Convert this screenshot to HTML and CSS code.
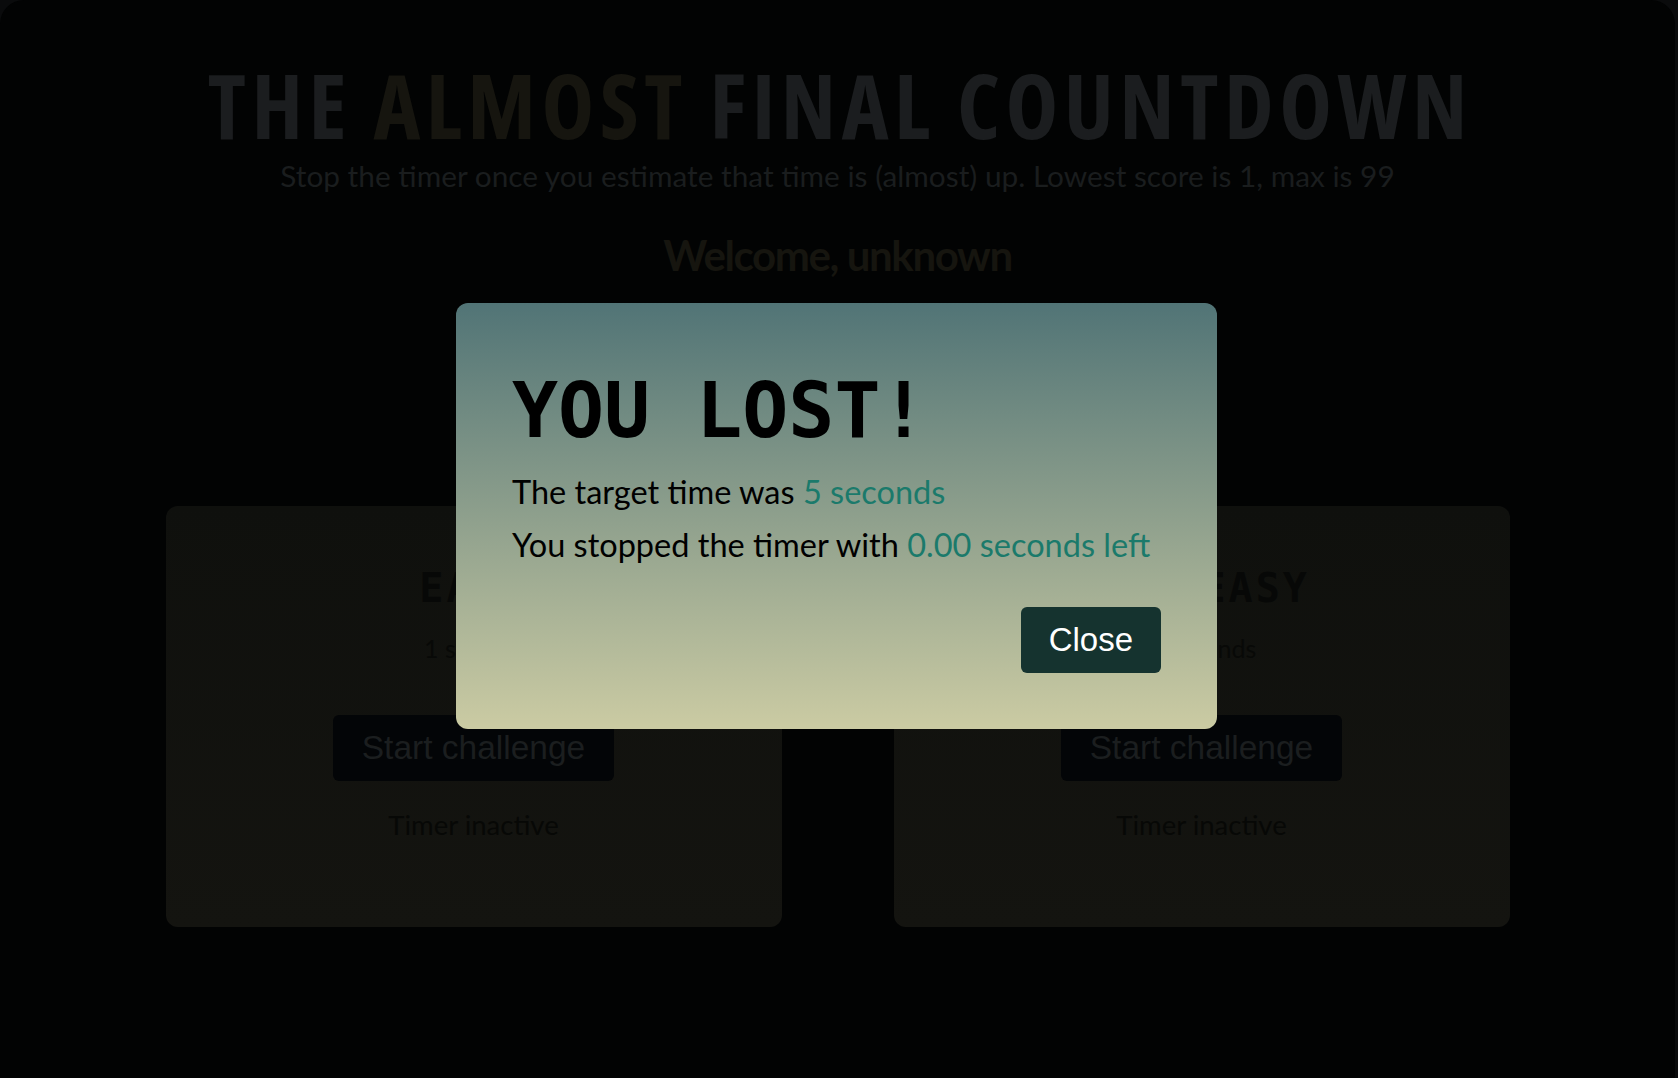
FILE: index.html
```html
<!DOCTYPE html>
<html lang="en">
<head>
<meta charset="utf-8">
<title>The Almost Final Countdown</title>
<link rel="stylesheet" href="styles.css">
</head>
<body>
<div class="content">
  <header class="header">
    <h1 class="title">THE <em class="title-em">ALMOST</em> FINAL COUNTDOWN</h1>
    <p class="subtitle">Stop the timer once you estimate that time is (almost) up. Lowest score is 1, max is 99</p>
  </header>
  <section class="player">
    <h2 class="welcome">Welcome, unknown</h2>
  </section>
  <div class="challenges">
    <section class="challenge">
      <h2 class="challenge-title">EASY</h2>
      <p class="challenge-time">1 second</p>
      <button class="start-btn">Start challenge</button>
      <p class="timer-status">Timer inactive</p>
    </section>
    <section class="challenge">
      <h2 class="challenge-title">NOT EASY</h2>
      <p class="challenge-time">5 seconds</p>
      <button class="start-btn">Start challenge</button>
      <p class="timer-status">Timer inactive</p>
    </section>
  </div>
</div>
<div class="modal">
  <h2 class="modal-title">YOU LOST!</h2>
  <p class="modal-line">The target time was <strong class="accent">5 seconds</strong></p>
  <p class="modal-line">You stopped the timer with <strong class="accent">0.00 seconds left</strong></p>
  <div class="modal-actions">
    <button class="close-btn">Close</button>
  </div>
</div>
</body>
</html>
```
FILE: styles.css
```css
* {
  box-sizing: border-box;
}

html {
  background: #0a0b0c;
  font-family: "Lato", "Noto Sans", sans-serif;
}

body {
  margin: 0;
  padding: 0 3px 0 0;
}

.content {
  background: #020303;
  border-radius: 24px;
  min-height: 1120px;
  padding-top: 58px;
}

.header {
  text-align: center;
}

.title {
  margin: 0;
  padding-left: 5.5px;
  font-family: "Open Sans", "Lato", sans-serif;
  font-stretch: 75%;
  font-weight: 700;
  font-size: 89px;
  letter-spacing: 5.5px;
  line-height: 1.05;
  color: #1b1d1f;
}

.title-em {
  font-style: normal;
  color: #16150f;
}

.subtitle {
  margin: 7px 0 0;
  font-size: 29.8px;
  line-height: 1.2;
  color: #1a1d1e;
}

.player {
  text-align: center;
  margin-top: 30px;
}

.welcome {
  margin: 0;
  font-size: 42px;
  font-weight: 700;
  letter-spacing: -1.4px;
  line-height: 1.5;
  color: #16150f;
}

.challenges {
  width: 1344px;
  margin: 219px auto 0;
  display: grid;
  grid-template-columns: 1fr 1fr;
  gap: 112px;
}

.challenge {
  display: flex;
  flex-direction: column;
  align-items: center;
  padding: 59px 24px 82px;
  border-radius: 12px;
  background: linear-gradient(#0f100d, #141410);
}

.challenge-title {
  margin: 0;
  font-family: "DejaVu Sans Mono", monospace;
  font-weight: 700;
  font-size: 40px;
  letter-spacing: 3px;
  line-height: normal;
  color: #070807;
}

.challenge-time {
  margin: 19px 0 0;
  font-size: 25px;
  line-height: 1.5;
  color: #080907;
}

.start-btn {
  margin-top: 47px;
  border: none;
  border-radius: 6px;
  padding: 14px 29px;
  background: #030507;
  color: #1b1e1f;
  font-family: "Liberation Sans", Arial, sans-serif;
  font-size: 33.5px;
  line-height: normal;
}

.timer-status {
  margin: 23px 0 0;
  font-size: 27.5px;
  line-height: 1.5;
  color: #070806;
}

.modal {
  position: fixed;
  top: 303px;
  left: calc(50% - 383px);
  width: 761px;
  padding: 64px 56px 56px;
  border-radius: 12px;
  background: linear-gradient(#517476, #cbcba3);
  color: #000;
}

.modal-title {
  margin: 0;
  font-family: "DejaVu Sans Mono", monospace;
  font-weight: 700;
  font-size: 76.5px;
  line-height: 87px;
}

.modal-line {
  margin: 15px 0 0;
  font-size: 32.5px;
  line-height: 45px;
}

.modal-line + .modal-line {
  margin-top: 8px;
}

.accent {
  font-weight: 400;
  color: #1b7a6b;
}

.modal-actions {
  display: flex;
  justify-content: flex-end;
  margin-top: 40px;
}

.close-btn {
  border: none;
  border-radius: 6px;
  padding: 14px 28px;
  background: #15332f;
  color: #fff;
  font-family: "Liberation Sans", Arial, sans-serif;
  font-size: 33px;
  line-height: normal;
}
```
